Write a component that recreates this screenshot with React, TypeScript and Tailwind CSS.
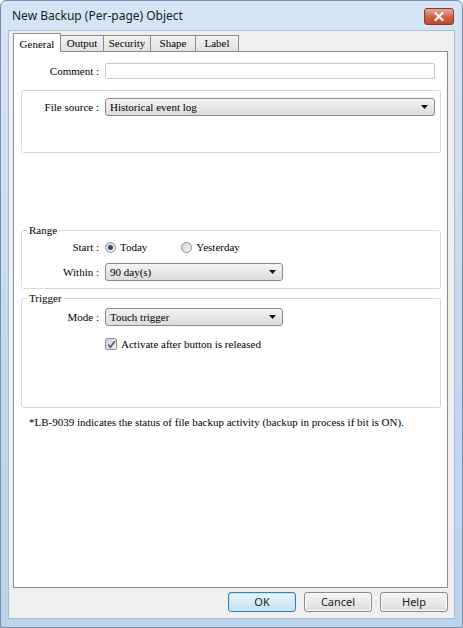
import React from "react";

const serif = "font-[family-name:Liberation_Serif,Times_New_Roman,serif]";
const sans = "font-[family-name:Noto_Sans,Open_Sans,sans-serif]";

const tabs = ["General", "Output", "Security", "Shape", "Label"];

function DropArrow() {
  return (
    <svg width="7" height="4" viewBox="0 0 7 4" className="shrink-0">
      <path d="M0 0h7L3.5 4z" fill="#111" />
    </svg>
  );
}

function Select({ value, width }: { value: string; width: string }) {
  return (
    <div
      className={`flex h-[18px] ${width} items-center justify-between rounded-[3px] border border-[#8a8a8a] bg-linear-to-b from-[#f4f4f4] to-[#dcdcdc] pl-[4px] pr-[6px] text-[11px] leading-[14px] text-black`}
    >
      <span>{value}</span>
      <DropArrow />
    </div>
  );
}

function Radio({ checked }: { checked?: boolean }) {
  return (
    <span className="flex h-[11px] w-[11px] items-center justify-center rounded-full border border-[#8e8f8f] bg-linear-to-br from-[#d4d4d4] to-[#f8f8f8]">
      {checked ? <span className="h-[5px] w-[5px] rounded-full bg-[#2c4a6e]" /> : null}
    </span>
  );
}

function Checkbox() {
  return (
    <span className="flex h-[12px] w-[12px] items-center justify-center rounded-[2px] border border-[#8f8f8f] bg-linear-to-br from-[#cfd2d6] to-[#eef0f2]">
      <svg width="9" height="9" viewBox="0 0 9 9">
        <path d="M1.2 4.6l2.2 2.6L7.8 1.2" fill="none" stroke="#3d5a8c" strokeWidth="1.6" />
      </svg>
    </span>
  );
}

function Button({ label, primary }: { label: string; primary?: boolean }) {
  return (
    <div
      className={`flex h-[20px] w-[68px] items-center justify-center rounded-[3px] border text-[11px] text-[#222] ${sans} ${
        primary
          ? "border-[#3c7fb1] bg-linear-to-b from-[#eaf6fd] to-[#c4e3f5] shadow-[inset_0_0_0_1px_#bde6fd]"
          : "border-[#8a8a8a] bg-linear-to-b from-[#f6f6f6] to-[#dddddd] shadow-[inset_0_0_0_1px_#fcfcfc]"
      }`}
    >
      {label}
    </div>
  );
}

export default function App() {
  return (
    <div className="h-[628px] w-[463px] overflow-hidden bg-white">
      <div className="flex h-full flex-col rounded-t-[6px] border border-[#7a8ea8] bg-linear-to-b from-[#d6e5f5] via-[#c6daef] to-[#bcd3ec] px-[7px] pb-[8px]">
        {/* title bar */}
        <div className="flex h-[29px] shrink-0 items-start justify-between">
          <span className={`mt-[7px] pl-[4px] text-[12px] leading-[16px] text-[#1b1b1b] ${sans}`}>
            New Backup (Per-page) Object
          </span>
          <div className="mr-[1px] mt-[7px] flex h-[17px] w-[30px] items-center justify-center rounded-[3px] border border-[#8a3a2c] bg-linear-to-b from-[#e7a89b] via-[#d06650] to-[#c2432c]">
            <svg width="10" height="9" viewBox="0 0 10 9">
              <path d="M1.5 1l7 7M8.5 1l-7 7" stroke="#fff" strokeWidth="2.2" strokeLinecap="square" />
            </svg>
          </div>
        </div>

        {/* client area */}
        <div className="flex flex-1 flex-col border border-[#a9bbd1] bg-[#f0f0f0] pl-[4px] pr-[6px] pt-[2px]">
          <div className={`flex h-[18px] items-end text-[11px] font-normal text-black ${serif}`}>
            {tabs.map((t, i) =>
              i === 0 ? (
                <div
                  key={t}
                  className="relative z-10 -mb-px flex h-[19px] w-[48px] items-start justify-center border border-b-0 border-[#898c95] bg-white pt-[2px]"
                >
                  {t}
                </div>
              ) : (
                <div
                  key={t}
                  className={`-ml-px flex h-[16px] items-center justify-center border border-b-0 border-[#898c95] bg-linear-to-b from-[#f3f3f3] to-[#e1e1e1] ${
                    i === 1 ? "w-[44px]" : i === 2 ? "w-[48px]" : i === 3 ? "w-[46px]" : "w-[44px]"
                  }`}
                >
                  {t}
                </div>
              )
            )}
          </div>

          {/* tab page */}
          <div className={`flex h-[537px] flex-col border border-[#898c95] bg-white text-[11px] font-normal leading-[14px] text-black ${serif}`}>
            <div className="mt-[11px] flex items-center">
              <span className="w-[85px] text-right">Comment :</span>
              <div className="ml-[6px] h-[16px] w-[330px] rounded-[2px] border border-[#c6c8cc] bg-white" />
            </div>

            <div className="ml-[7px] mr-[6px] mt-[11px] h-[63px] rounded-[3px] border border-[#d5dadf] pt-[7px]">
              <div className="flex items-center">
                <span className="w-[77px] text-right">File source :</span>
                <div className="ml-[6px]">
                  <Select value="Historical event log" width="w-[330px]" />
                </div>
              </div>
            </div>

            <fieldset className="ml-[7px] mr-[6px] mt-[70px] h-[66px] rounded-[3px] border border-[#d5dadf]">
              <legend className="ml-[5px] px-[2px] leading-[14px]">Range</legend>
              <div className="mt-[2px] flex h-[16px] items-center">
                <span className="w-[77px] text-right">Start :</span>
                <span className="ml-[6px] flex items-center gap-[4px]">
                  <Radio checked />
                  Today
                </span>
                <span className="ml-[34px] flex items-center gap-[4px]">
                  <Radio />
                  Yesterday
                </span>
              </div>
              <div className="mt-[8px] flex items-center">
                <span className="w-[77px] text-right">Within :</span>
                <div className="ml-[6px]">
                  <Select value="90 day(s)" width="w-[178px]" />
                </div>
              </div>
            </fieldset>

            <fieldset className="ml-[7px] mr-[6px] mt-[2px] h-[117px] rounded-[3px] border border-[#d5dadf]">
              <legend className="ml-[5px] px-[2px] leading-[14px]">Trigger</legend>
              <div className="mt-[3px] flex items-center">
                <span className="w-[77px] text-right">Mode :</span>
                <div className="ml-[6px]">
                  <Select value="Touch trigger" width="w-[178px]" />
                </div>
              </div>
              <div className="ml-[83px] mt-[11px] flex items-center gap-[4px]">
                <Checkbox />
                Activate after button is released
              </div>
            </fieldset>

            <p className="ml-[15px] mt-[7px]">
              *LB-9039 indicates the status of file backup activity (backup in process if bit is ON).
            </p>
          </div>

          {/* dialog buttons */}
          <div className="mt-[4px] flex justify-end gap-[8px]">
            <Button label="OK" primary />
            <Button label="Cancel" />
            <Button label="Help" />
          </div>
        </div>
      </div>
    </div>
  );
}
